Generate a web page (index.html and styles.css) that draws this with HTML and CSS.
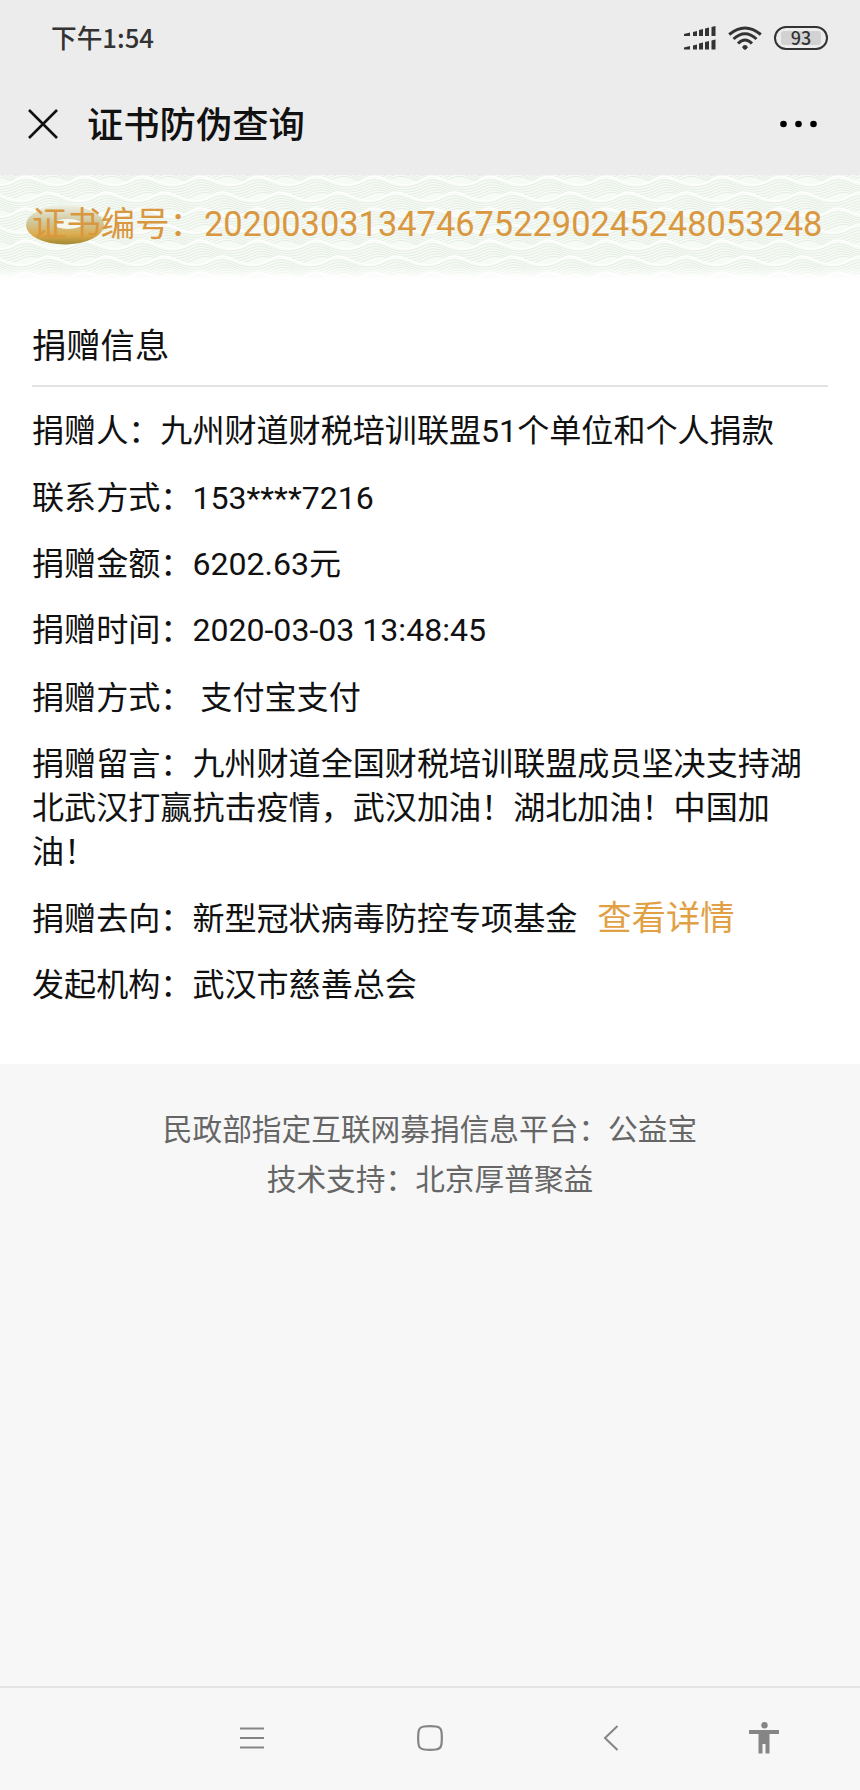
FILE: index.html
```html
<!DOCTYPE html>
<html lang="zh-CN">
    <head>
        <title>证书防伪查询</title>
        <meta charset="utf-8" />
        <meta name="viewport" content="width=device-width, initial-scale=1.0" />
        <link rel="stylesheet" href="styles.css">
    </head>
    <body>
        <div class="status">
            <span class="time">下午1:54</span>
            <svg class="signal" width="34" height="26" viewBox="0 0 34 26" fill="#333">
                <path d="M1 9l6-1.500v3.500h-6zM10 7l4-1v5h-4zM16 5l4-1v7h-4zM22 3.500l4-1V11h-4zM28.500 2l4-1v10h-4z" />
                <path d="M1 22.500l6-1.500v3.500h-6zM10 20.500l4-1v5h-4zM16 18.500l4-1v7h-4zM22 17l4-1v8.500h-4zM28.500 15.500l4-1v10h-4z" />
            </svg>
            <svg class="wifi" width="34" height="26" viewBox="0 0 34 26" fill="none" stroke="#333" stroke-width="3">
                <path d="M1.200 9.500Q17-3.500 32.800 9.500M5.500 14Q17 3.500 28.500 14M10 18.500Q17 11.500 24 18.500" />
                <path d="M14 22q3-2.500 6 0l-3 3z" fill="#333" stroke="none" />
                <circle cx="17" cy="22.300" r="2.300" fill="#333" stroke="none" />
            </svg>
            <span class="battery"><span class="level">93</span></span>
        </div>
        <div class="titlebar">
            <svg class="close" width="32" height="32" viewBox="0 0 32 32" fill="none" stroke="#111" stroke-width="2.600">
                <path d="M2 2l28 28M30 2L2 30" />
            </svg>
            <h1>证书防伪查询</h1>
            <svg width="40" height="8" viewBox="0 0 40 8" fill="#000">
                <circle cx="4.500" cy="4" r="3.300" />
                <circle cx="19.500" cy="4" r="3.300" />
                <circle cx="34.500" cy="4" r="3.300" />
            </svg>
        </div>
        <div class="number">
            <svg class="waves" width="860" height="104">
                <defs>
                    <g id="crest" fill="none" stroke="#dbe6db" stroke-width="0.700">
                        <path d="M-58 10C-46 10-42 1-32 1S-14 10 0 10 16 1 26 1 44 10 58 10 74 1 84 1 102 10 116 10V40H-58z" fill="#f7fbf5" stroke="#fff" stroke-width="1.500" />
                        <path id="line" d="M-58 12C-44 12-40 4-30 5S-14 13 0 12 18 4 28 5 44 13 58 12 76 4 86 5 102 13 116 12" />
                        <use href="#line" x="1" y="2.500" />
                        <use href="#line" x="2" y="5" />
                        <use href="#line" x="3" y="7.500" />
                        <use href="#line" x="4" y="10" />
                        <use href="#line" x="5" y="12.500" />
                    </g>
                    <pattern id="sea" width="58" height="32" patternUnits="userSpaceOnUse">
                        <use href="#crest" x="22" y="-16" />
                        <use href="#crest" />
                        <use href="#crest" x="22" y="16" />
                    </pattern>
                    <linearGradient id="fade" x1="0" y1="0" x2="0" y2="1">
                        <stop offset="0" stop-color="#fff" stop-opacity="0" />
                        <stop offset="1" stop-color="#fff" />
                    </linearGradient>
                </defs>
                <rect width="860" height="104" fill="url(#sea)" />
                <rect y="92" width="860" height="12" fill="url(#fade)" />
            </svg>
            <svg class="ring" width="80" height="42" viewBox="0 0 80 42">
                <defs>
                    <linearGradient id="gold" x1="0" y1="0" x2="0" y2="1">
                        <stop offset="0" stop-color="#eceee2" />
                        <stop offset="0.400" stop-color="#cfc9a0" />
                        <stop offset="0.750" stop-color="#dcab4c" />
                        <stop offset="1" stop-color="#a18a32" />
                    </linearGradient>
                </defs>
                <ellipse cx="40" cy="20" rx="39" ry="19.500" fill="url(#gold)" />
                <ellipse cx="43" cy="19" rx="14" ry="5" fill="#f7f8ee" />
            </svg>
            <span class="code">证书编号：20200303134746752290245248053248</span>
        </div>
        <div class="info">
            <h2>捐赠信息</h2>
            <p>捐赠人：九州财道财税培训联盟51个单位和个人捐款</p>
            <p class="phone">联系方式：153****7216</p>
            <p>捐赠金额：6202.63元</p>
            <p>捐赠时间：2020-03-03 13:48:45</p>
            <p class="method">捐赠方式：&nbsp;支付宝支付</p>
            <p>捐赠留言：九州财道全国财税培训联盟成员坚决支持湖北武汉打赢抗击疫情，武汉加油！湖北加油！中国加油！</p>
            <p>捐赠去向：新型冠状病毒防控专项基金<a class="detail">查看详情</a></p>
            <p>发起机构：武汉市慈善总会</p>
        </div>
        <div class="footer">
            <p>民政部指定互联网募捐信息平台：公益宝</p>
            <p>技术支持：北京厚普聚益</p>
        </div>
        <div class="nav">
            <svg class="menu" width="26" height="26" viewBox="0 0 26 26" fill="none" stroke="#858585" stroke-width="2">
                <path d="M1 3.500h24M1 13h24M1 22.500h24" />
            </svg>
            <svg class="home" width="26" height="26" viewBox="0 0 26 26" fill="none" stroke="#858585" stroke-width="2.200">
                <path d="M7 1.500Q13 .8 19 1.500 24 2 24.500 7 25.200 13 24.500 19 24 24 19 24.500 13 25.200 7 24.500 2 24 1.500 19 .8 13 1.500 7 2 2 7 1.500z" />
            </svg>
            <svg class="back" width="16" height="28" viewBox="0 0 16 28" fill="none" stroke="#858585" stroke-width="2">
                <path d="M14.500 2L2 14l12.500 12" />
            </svg>
            <svg class="person" width="30" height="32" viewBox="0 0 30 32" fill="#858585">
                <circle cx="15.500" cy="3.200" r="3.200" />
                <path d="M0 8h30v4h-9.500v19.500h-4V22h-3v9.500h-4V12H0z" />
            </svg>
        </div>
    </body>
</html>
```

FILE: styles.css
```css
html, body {
    margin: 0px;
    padding: 0px;
    background: #f7f7f7;
    font-family: Roboto, "Noto Sans CJK SC", sans-serif;
    color: #111;
}
body {
    display: flex;
    flex-direction: column;
    height: 1790px;
}
svg {
    display: block;
    flex: none;
}
h1, h2, p {
    margin: 0px;
    font-weight: normal;
}
.status {
    display: flex;
    align-items: center;
    box-sizing: border-box;
    height: 76px;
    padding: 0px 32px 0px 51px;
    background: #ececec;
    font-family: "Noto Sans CJK SC", sans-serif;
    font-weight: 500;
    color: #333;
}
.time {
    margin-right: auto;
    padding-bottom: 3px;
    font-size: 25.7px;
}
.wifi {
    margin: 0px 12px 0px 11px;
}
.battery {
    display: flex;
    box-sizing: border-box;
    width: 54px;
    height: 24px;
    padding: 3px 5px;
    border: 2px solid #333;
    border-radius: 12px;
}
.level {
    width: 40px;
    height: 14px;
    border-radius: 3px;
    background: #d2d2d2;
    font-size: 18px;
    line-height: 13px;
    text-align: center;
}
.titlebar {
    display: flex;
    align-items: center;
    box-sizing: border-box;
    height: 99px;
    padding: 0px 41px 4px 27px;
    background: #ececec;
}
.titlebar h1 {
    margin: 0px auto 0px 28px;
    padding-bottom: 3px;
    font-size: 36.3px;
    font-weight: 500;
}
.number {
    position: relative;
    height: 104px;
    padding-left: 32px;
    color: #d9973f;
    font-size: 34.4px;
    line-height: 98px;
    white-space: nowrap;
}
.waves {
    position: absolute;
    top: 0px;
    left: 0px;
}
.ring {
    position: absolute;
    top: 30px;
    left: 25px;
}
.code {
    position: relative;
}
.info {
    box-sizing: border-box;
    height: 785px;
    padding: 30px 32px 0px;
    background: #fff;
    font-size: 32.1px;
    line-height: 44px;
}
.info h2 {
    height: 76px;
    border-bottom: 2px solid #e2e2e2;
    font-size: 34.3px;
    line-height: 74px;
}
.info p {
    margin-top: 22px;
}
.info .phone {
    margin-top: 23px;
}
.info .method {
    margin-top: 24px;
}
.detail {
    margin-left: 20px;
    color: #e2a044;
    font-size: 34.3px;
}
.footer {
    padding-top: 41px;
    color: #666;
    font-size: 29.7px;
    line-height: 50px;
    text-align: center;
}
.nav {
    display: flex;
    align-items: center;
    box-sizing: border-box;
    height: 104px;
    margin-top: auto;
    padding: 0px 66px 2px 239px;
    border-top: 2px solid #e4e4e4;
}
.home {
    margin-left: 152px;
}
.back {
    margin-left: 160px;
}
.person {
    margin-left: 130px;
}
```
